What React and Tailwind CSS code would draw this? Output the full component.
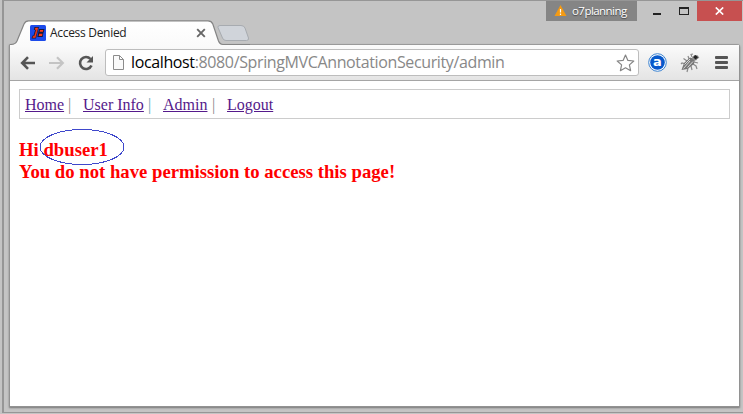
import React from "react";

function Tab() {
  return (
    <div className="relative z-10 ml-[6px] flex h-[25px] w-[240px] items-center">
      <svg className="absolute left-0 top-0" width="240" height="26" viewBox="0 0 240 26" fill="none">
        <defs>
          <linearGradient id="tabFill" x1="0" y1="0" x2="0" y2="1">
            <stop offset="0" stopColor="#ffffff" />
            <stop offset="1" stopColor="#fafafa" />
          </linearGradient>
        </defs>
        <path d="M2 26V24.500C5 24.500 6 23 7 21L14 4Q15.500 .9 18.500 .9H198Q201.500 .9 202.800 4L208.500 21Q210 24.500 213 24.500V26Z" fill="url(#tabFill)" />
        <path d="M0 24.500H1C4.500 24.500 6 23 7 21L14 4Q15.500 .9 18.500 .9H198Q201.500 .9 202.800 4L208.500 21Q210 24.500 213 24.500H240" stroke="#858585" strokeWidth="1.200" />
        <path d="M210 5.500H231Q234 5.500 235 8L238.500 18Q239 20.500 236.500 20.500H216Q213.500 20.500 212.500 18L208 7.500Q207.500 5.500 210 5.500Z" fill="#d0d4da" stroke="#a7abb0" />
      </svg>
      <svg className="relative ml-[20px] shrink-0" width="16" height="16" viewBox="0 0 16 16">
        <rect width="16" height="16" rx="1.500" fill="#1c4bea" />
        <path d="M4.500 2H9L6 13.500H1.500L2.500 10.500H3.500L5.200 5H3.800Z" fill="#16183c" />
        <path d="M5.500 3H7.800L5.300 12.500H2.800L3.200 11.300H4.500L6.500 4.500H5.200Z" fill="#ff3b16" stroke="#ff3b16" strokeWidth=".5" />
        <path d="M9 4H14.500L13.700 7.500H13.500L12.700 12H7.300Z" fill="#16183c" />
        <path d="M10 5H13.300L12.900 6.800H9.600ZM9.200 8.800H12.500L12 11H8.700Z" fill="#ff3b16" />
      </svg>
      <span className="relative ml-[4px] w-[146px] whitespace-nowrap text-[12px] leading-[16px] tracking-[-0.3px] text-[#222]">Access Denied</span>
      <svg className="relative shrink-0" width="10" height="10" viewBox="0 0 10 10" stroke="#666" strokeWidth="1.900">
        <path d="M1.200 1.200L8.800 8.800M8.800 1.200L1.200 8.800" />
      </svg>
    </div>
  );
}

function WindowControls() {
  return (
    <div className="mr-px flex h-[21px]">
      <div className="flex h-[20px] w-[91px] items-center bg-[#858585] pl-[8px]">
        <svg width="13" height="12" viewBox="0 0 13 12">
          <path d="M6.500 0L12.500 11H.5Z" fill="#f39a13" />
          <path d="M6.500 4V7.500M6.500 8.500V10" stroke="#fff" strokeWidth="1.200" />
        </svg>
        <span className="ml-[5px] text-[11.500px] leading-[16px] tracking-[-0.55px] text-white [text-shadow:0_1px_1px_#444]">o7planning</span>
      </div>
      <div className="flex w-[60px] items-start">
        <div className="ml-[16px] mt-[12px] h-[2px] w-[8px] bg-[#222]" />
        <div className="ml-[18px] mt-[6px] h-[8px] w-[10px] border border-t-2 border-[#222]" />
      </div>
      <div className="flex h-[20px] w-[45px] items-center justify-center bg-[#c75050]">
        <svg width="9" height="8" viewBox="0 0 9 8" stroke="#fff" strokeWidth="1.700">
          <path d="M.8 .5L8.200 7.500M8.200 .5L.8 7.500" />
        </svg>
      </div>
    </div>
  );
}

function Toolbar() {
  return (
    <div className="flex h-[36px] shrink-0 items-center border-b border-[#a5a5a5] bg-linear-to-b from-[#fbfbfb] to-[#e4e4e4]">
      <svg className="ml-[10px] shrink-0" width="16" height="14" viewBox="0 0 16 14" fill="none" stroke="#555" strokeWidth="2.600">
        <path d="M15 7H2.500M8 1.200L2.200 7L8 12.800" />
      </svg>
      <svg className="ml-[13px] shrink-0" width="16" height="14" viewBox="0 0 16 14" fill="none" stroke="#c4c4c4" strokeWidth="2.200">
        <path d="M0 7H13.500M8 1.200L13.800 7L8 12.800" />
      </svg>
      <svg className="ml-[13px] shrink-0" width="16" height="16" viewBox="0 0 16 16" fill="none">
        <path d="M12.500 4A6 6 0 1 0 13.500 10.500" stroke="#555" strokeWidth="2.600" />
        <path d="M15 1V7.500H8.500Z" fill="#555" />
      </svg>
      <div className="ml-[11px] flex h-[27px] w-[534px] shrink-0 items-center rounded-[3px] border border-[#bdbdbd] bg-white">
        <svg className="ml-[6px] shrink-0" width="13" height="16" viewBox="0 0 13 16" fill="#fafafa" stroke="#8c8c8c">
          <path d="M1.500 .5H7.500L11.500 4.500V14.500H1.500ZM7.500 .5V4.500H11.500" />
        </svg>
        <span className="relative top-[-1px] ml-[6px] w-[485px] whitespace-nowrap text-[16px] leading-[22px] tracking-[-0.37px] text-[#888]"><span className="text-black">localhost</span>:8080/SpringMVCAnnotationSecurity/admin</span>
        <svg className="shrink-0" width="19" height="18" viewBox="0 0 19 18" fill="#fff" stroke="#858585" strokeWidth="1.200" strokeLinejoin="round">
          <path d="M9.500 1L11.900 6.400L17.800 7L13.400 10.900L14.600 16.700L9.500 13.800L4.400 16.700L5.600 10.900L1.200 7L7.100 6.400Z" />
        </svg>
      </div>
      <svg className="ml-[9px] shrink-0" width="19" height="19" viewBox="0 0 19 19">
        <circle cx="9.500" cy="9.500" r="8.800" fill="#fff" stroke="#3981d0" />
        <circle cx="9.500" cy="9.500" r="7.300" fill="#0759cb" />
        <text x="9.500" y="13.300" textAnchor="middle" fill="#fff" className="font-['DejaVu_Sans',sans-serif] text-[13px] font-bold">a</text>
      </svg>
      <svg className="ml-[13px] shrink-0" width="20" height="20" viewBox="0 0 20 20" fill="none">
        <g stroke="#8a8a8a" strokeWidth="1.200">
          <path d="M7 8L3.500 5.500M6 11L2 10L1 11M8 15L7 19M11 13L12 17M13 11L16 13L17 16M14 9L18 10M9 6L8 3M12 4L11 1.500L13 1M16 6L19 4" />
        </g>
        <path d="M1.500 17L4 10L10 4.500L15 6L14 11L7.500 16Z" fill="#777" />
        <path d="M3.500 15.500L10 8M7.500 14.500L13 8.500M4.500 11.500L10 6" stroke="#d8d8d8" />
        <path d="M12 4.500L14 2L18 2.500L18.500 5L16 7.500L13 7Z" fill="#8a8a8a" />
        <path d="M15.500 2L18 4.200L15.500 6.500L13.300 4.200Z" fill="#222" />
        <path d="M12.500 2.500H13.500M17.500 6.500H18.500" stroke="#fff" />
      </svg>
      <div className="ml-[15px] flex flex-col gap-[2px]">
        <div className="h-[3px] w-[13px] rounded-[1px] bg-[#555]" />
        <div className="h-[3px] w-[13px] rounded-[1px] bg-[#555]" />
        <div className="h-[3px] w-[13px] rounded-[1px] bg-[#555]" />
      </div>
    </div>
  );
}

function Page() {
  return (
    <main className="grow pl-[9px] pr-[8px] pt-[8px] font-['Liberation_Serif',serif]">
      <nav className="flex h-[30px] w-[711px] border border-[#ccc] pl-[5px] pt-[5px] text-[16px] leading-[19px] text-[#551a8b]">
        <a className="w-[43px] underline">Home</a>
        <span className="w-[15px] text-[#888]">|</span>
        <a className="w-[65px] underline">User Info</a>
        <span className="w-[15px] text-[#5fa5b5]">|</span>
        <a className="w-[49px] underline">Admin</a>
        <span className="w-[15px] text-[#888]">|</span>
        <a className="underline">Logout</a>
      </nav>
      <h3 className="relative mt-[20px] text-[18.720px] font-bold leading-[22px] text-[#f00]">
        Hi dbuser1<br />You do not have permission to access this page!
        <svg className="absolute left-[20px] top-[-11px]" width="86" height="38" viewBox="0 0 86 38" fill="none" shapeRendering="crispEdges">
          <ellipse cx="43" cy="19" rx="42" ry="17.500" stroke="#3f48cc" />
        </svg>
      </h3>
    </main>
  );
}

export default function App() {
  return (
    <div className="flex h-[414px] w-[743px] bg-[#c4c4c4] font-['Open_Sans',sans-serif]">
      <div className="w-[2px] shrink-0" />
      <div className="flex h-[413px] w-[741px] flex-col border-y border-l-2 border-[#969696]">
        <header className="flex h-[43px] shrink-0 justify-between">
          <div className="pt-[19px]"><Tab /></div>
          <WindowControls />
        </header>
        <div className="ml-[5px] flex h-[363px] w-[731px] flex-col rounded-tr-[3px] border border-[#929292] border-t-[#999] bg-white shadow-[0_1px_2px_#777]">
          <Toolbar />
          <Page />
        </div>
      </div>
    </div>
  );
}
